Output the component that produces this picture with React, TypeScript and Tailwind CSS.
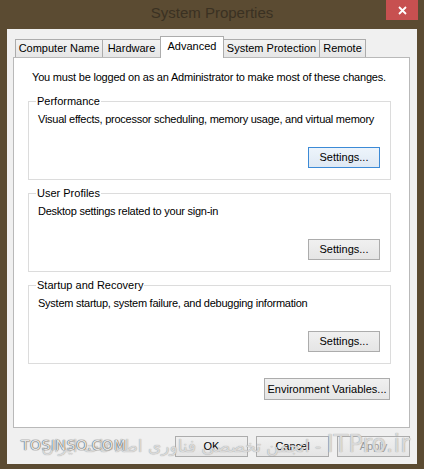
import React from 'react';

const font = "font-['Liberation_Sans',Arial,sans-serif]";

const tabs = [
  { label: 'Computer Name', width: 'w-[88px]' },
  { label: 'Hardware', width: 'w-[59px]' },
  { label: 'Advanced', width: 'w-[64px]', active: true },
  { label: 'System Protection', width: 'w-[97px]' },
  { label: 'Remote', width: 'w-[47px]' },
];

const groups = [
  {
    title: 'Performance',
    text: 'Visual effects, processor scheduling, memory usage, and virtual memory',
    focused: true,
  },
  { title: 'User Profiles', text: 'Desktop settings related to your sign-in' },
  { title: 'Startup and Recovery', text: 'System startup, system failure, and debugging information' },
];

function Button({
  label,
  size,
  focused = false,
  disabled = false,
}: {
  label: string;
  size: string;
  focused?: boolean;
  disabled?: boolean;
}) {
  const skin = focused
    ? 'border-[#3c8ad6] bg-linear-to-b from-[#edf4fb] to-[#dfe9f4]'
    : 'border-[#acacac] bg-linear-to-b from-[#f0f0f0] to-[#e5e5e5]';
  return (
    <div
      className={`flex items-center justify-center border text-[11px] leading-[13px] ${size} ${skin} ${
        disabled ? 'text-[#9a9a9a]' : 'text-black'
      }`}
    >
      {label}
    </div>
  );
}

function Tab({ label, width, active }: { label: string; width: string; active?: boolean }) {
  if (active) {
    return (
      <div
        className={`relative z-10 -mb-px -ml-px flex h-[22px] items-center justify-center border border-b-0 border-[#acacac] bg-white pb-[2px] text-[11px] ${width}`}
      >
        {label}
      </div>
    );
  }
  return (
    <div
      className={`-ml-px flex h-[18px] items-center justify-center border border-b-0 border-[#acacac] bg-linear-to-b from-[#f2f2f2] to-[#e6e6e6] text-[11px] first:ml-0 ${width}`}
    >
      {label}
    </div>
  );
}

export default function App() {
  return (
    <div className={`relative h-[469px] w-[424px] overflow-hidden bg-[#5b4b32] ${font}`}>
      {/* Title bar */}
      <div className="grid h-[29px] grid-cols-[1fr_auto_1fr] items-start">
        <div />
        <div className="pt-[4px] text-[15px] leading-[18px] text-[#3a3122]">System Properties</div>
        <div className="flex justify-end pr-[6px]">
          <div className="flex h-[20px] w-[32px] items-center justify-center bg-[#c75050]">
            <svg width="9" height="9" viewBox="0 0 9 9">
              <path d="M1 1 L8 8 M8 1 L1 8" stroke="#fff" strokeWidth="1.8" />
            </svg>
          </div>
        </div>
      </div>

      {/* Client area */}
      <div className="ml-[7px] h-[435px] w-[410px] bg-[#f0f0f0] pl-[6px] pt-[7px]">
        <div className="flex items-end pl-[2px]">
          {tabs.map((t) => (
            <Tab key={t.label} {...t} />
          ))}
        </div>

        <div className="h-[371px] w-[397px] border border-[#b9b9b9] bg-white">
          <p className="ml-[18px] mt-[12px] whitespace-nowrap text-[11px] leading-[15px] tracking-[-0.2px]">
            You must be logged on as an Administrator to make most of these changes.
          </p>

          {groups.map((g, i) => (
            <fieldset
              key={g.title}
              className={`ml-[14px] w-[363px] border border-[#dcdcdc] ${i === 0 ? 'mt-[10px]' : 'mt-[7px]'}`}
            >
              <legend className="ml-[7px] px-[1px] text-[11px] leading-[13px]">{g.title}</legend>
              <p className="ml-[9px] mt-[4px] whitespace-nowrap text-[11px] leading-[15px] tracking-[-0.25px]">
                {g.text}
              </p>
              <div className="mb-[11px] mr-[10px] mt-[20px] flex justify-end">
                <Button label="Settings..." size="h-[21px] w-[72px]" focused={g.focused} />
              </div>
            </fieldset>
          ))}

          <div className="mr-[19px] mt-[14px] flex justify-end">
            <Button label="Environment Variables..." size="h-[22px] w-[126px]" />
          </div>
        </div>

        <div className="mt-[8px] flex justify-end gap-[8px] pr-[7px]">
          <Button label="OK" size="h-[21px] w-[73px]" />
          <Button label="Cancel" size="h-[21px] w-[73px]" />
          <Button label="Apply" size="h-[21px] w-[73px]" disabled />
        </div>
      </div>

      {/* Watermark overlay */}
      <div className="pointer-events-none absolute left-[20px] top-[432px] flex h-[26px] w-[390px] items-center justify-end">
        <span
          dir="rtl"
          className="whitespace-nowrap font-['DejaVu_Sans',sans-serif] text-[17px] text-[#e6e6e6]/85 [text-shadow:0_0_1px_#8a8a8a]"
        >
          <span className="text-[24px] leading-[26px]">ITPro.ir</span> - انجمن تخصصی فناوری اطلاعات ایران
        </span>
      </div>
      <div className="pointer-events-none absolute left-[21px] top-[437px] font-['DejaVu_Sans',sans-serif] text-[14px] leading-[16px] tracking-[0.5px] text-white/85 [text-shadow:0_0_1px_#444,0_0_1px_#444]">
        TOSINSO.COM
      </div>
    </div>
  );
}
